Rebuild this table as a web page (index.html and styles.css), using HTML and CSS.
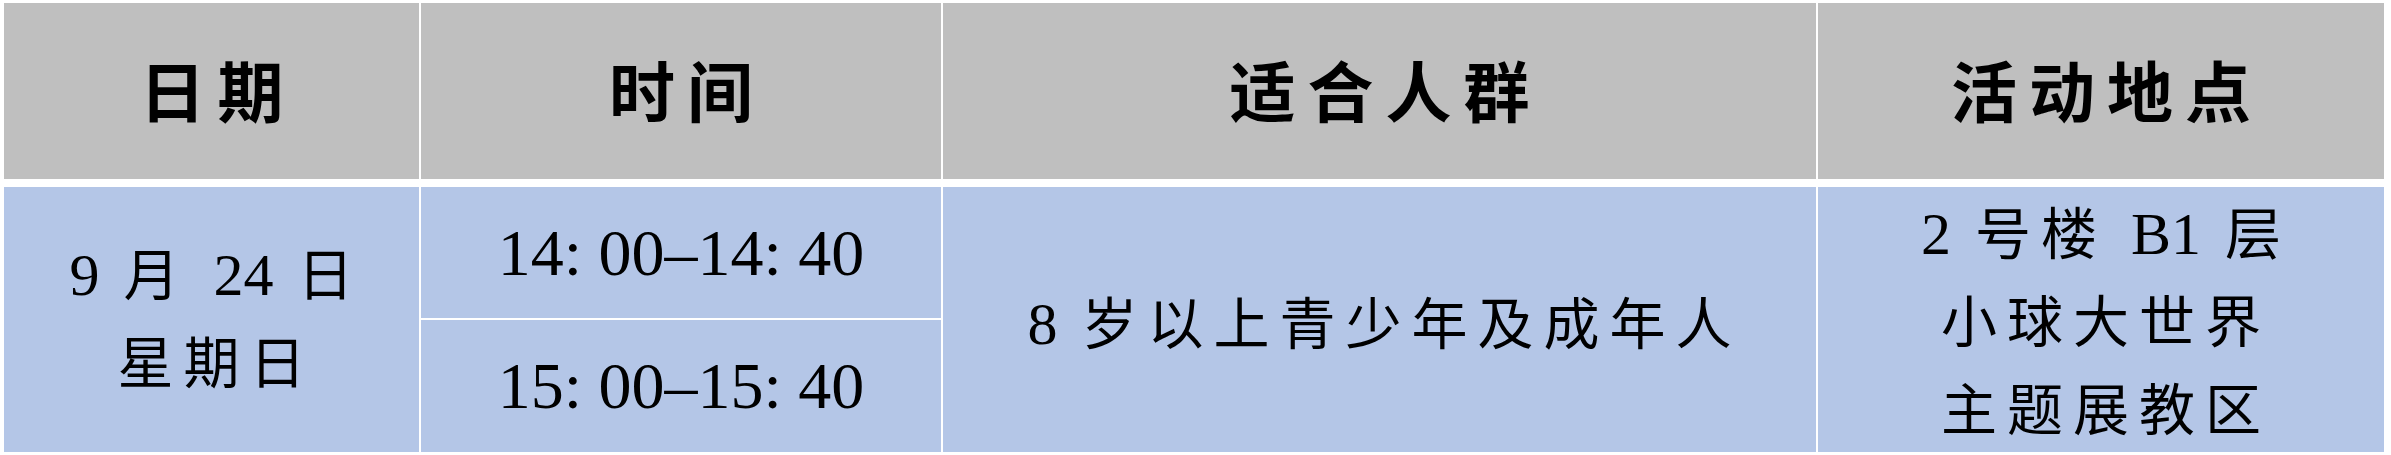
FILE: index.html
```html
<!DOCTYPE html>
<html lang="zh-CN">
<head>
<meta charset="utf-8">
<title>活动安排</title>
<link rel="stylesheet" href="styles.css">
</head>
<body>
<div class="sheet">
  <div class="grid head">
    <div class="cell th">日期</div>
    <div class="cell th">时间</div>
    <div class="cell th">适合人群</div>
    <div class="cell th">活动地点</div>
  </div>
  <div class="grid body-rows">
    <div class="cell td span2 lines">
      <span><span class="num">9</span> 月 <span class="num">24</span> 日</span>
      <span>星期日</span>
    </div>
    <div class="cell td time">14: 00–14: 40</div>
    <div class="cell td span2 c3"><span><span class="num">8</span> 岁以上青少年及成年人</span></div>
    <div class="cell td span2 lines c4">
      <span><span class="num">2</span> 号楼 <span class="num">B1</span> 层</span>
      <span>小球大世界</span>
      <span>主题展教区</span>
    </div>
    <div class="cell td time r2">15: 00–15: 40</div>
  </div>
</div>
</body>
</html>
```

FILE: styles.css
```css
html, body {
  margin: 0;
  padding: 0;
  background: #ffffff;
}

.sheet {
  width: 2391px;
  height: 455px;
  box-sizing: border-box;
  padding: 3px 7px 3px 4px;
  font-family: "Liberation Serif", "Noto Sans CJK SC", serif;
  color: #000000;
}

.grid {
  display: grid;
  grid-template-columns: 415px 520px 873px 566px;
  column-gap: 2px;
}

.head {
  grid-template-rows: 176px;
  margin-bottom: 8px;
}

.body-rows {
  grid-template-rows: 131px 132px;
  row-gap: 2px;
}

.cell {
  display: flex;
  align-items: center;
  justify-content: center;
  text-align: center;
  white-space: nowrap;
}

.th {
  background: #bfbfbf;
  font-family: "Noto Sans CJK SC", sans-serif;
  font-weight: 700;
  font-size: 66px;
  letter-spacing: 12px;
  padding-left: 12px;
  padding-bottom: 6px;
}

.td {
  background: #b4c6e7;
  font-size: 56px;
  font-weight: 400;
  letter-spacing: 10px;
  padding-left: 10px;
}

.num {
  letter-spacing: 0;
  font-size: 60px;
}

.span2 {
  grid-row: span 2;
}

.lines {
  flex-direction: column;
  line-height: 88px;
}

.time {
  font-size: 66px;
  letter-spacing: 0;
  padding-left: 0;
  grid-column: 2;
  grid-row: 1;
}

.time.r2 {
  grid-row: 2;
}

.c3 {
  grid-column: 3;
  grid-row: 1 / span 2;
}

.c4 {
  grid-column: 4;
  grid-row: 1 / span 2;
  padding-top: 6px;
}
```
